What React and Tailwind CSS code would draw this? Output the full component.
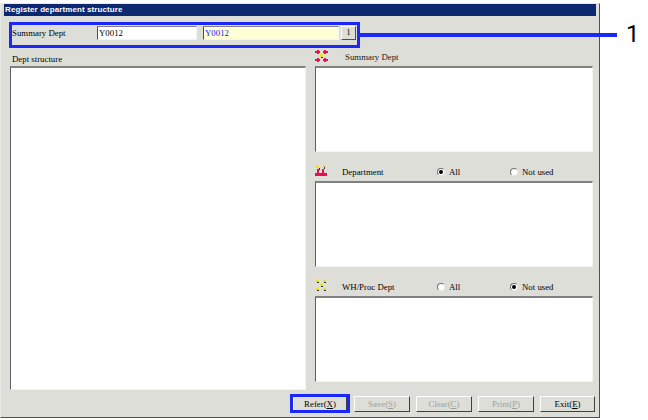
const serif = { fontFamily: '"Liberation Serif", serif' };

function Sunken({ className = '' }) {
  return (
    <div className={`bg-white border-t-2 border-l border-t-[#808080] border-l-[#606060] border-r border-b border-r-[#f4f4f0] border-b-[#f4f4f0] ${className}`} />
  );
}

function Field({ value, className = '' }) {
  return (
    <div className={`h-[14px] pl-[1px] leading-[12px] border border-t-[#808080] border-l-[#505050] border-r-[#f4f4f0] border-b-[#f4f4f0] ${className}`}>
      {value}
    </div>
  );
}

function Btn({ label, hotkey, disabled, className = '' }) {
  return (
    <button className={`h-[16px] flex items-center justify-center bg-[#deded8] border border-t-white border-l-white border-r-[#404040] border-b-[#404040] text-[8.8px] leading-none ${disabled ? 'text-[#a0a09a]' : 'text-black'} ${className}`}>
      {label}(<span className="underline">{hotkey}</span>)
    </button>
  );
}

function Radio({ checked, label, className = '' }) {
  return (
    <div className={`flex items-center gap-[4px] ${className}`}>
      <span className="w-[8px] h-[8px] rounded-full bg-white border border-t-[#707070] border-l-[#707070] border-r-[#e8e8e8] border-b-[#e8e8e8] flex items-center justify-center">
        {checked && <span className="w-[4px] h-[4px] rounded-full bg-black" />}
      </span>
      <span>{label}</span>
    </div>
  );
}

function SummaryIcon() {
  return (
    <svg width="13" height="12" viewBox="0 0 13 12" className="shrink-0">
      <path d="M0 1h2V0h2v1h1v2H4v1H2V3H0z" fill="#e8104f" />
      <path d="M13 1h-2V0H9v1H8v2h1v1h2V3h2z" fill="#e8104f" />
      <path d="M0 11h2v1h2v-1h1V9H4V8H2v1H0z" fill="#e8104f" />
      <path d="M13 11h-2v1H9v-1H8V9h1V8h2v1h2z" fill="#e8104f" />
      <rect x="5" y="4" width="3" height="3" fill="#e8e020" />
      <rect x="6" y="7" width="2" height="1" fill="#303030" />
    </svg>
  );
}

function DeptIcon() {
  return (
    <svg width="13" height="11" viewBox="0 0 13 11" className="shrink-0 mb-[3px]">
      <rect x="0" y="8" width="12" height="3" fill="#e8104f" />
      <rect x="2" y="4" width="2" height="5" fill="#e8104f" />
      <rect x="7" y="4" width="2" height="5" fill="#e8104f" />
      <rect x="1" y="1" width="3" height="2" fill="#e8e020" />
      <rect x="8" y="0" width="3" height="2" fill="#e8e020" />
      <rect x="4" y="3" width="1" height="2" fill="#303030" />
      <rect x="9" y="2" width="1" height="2" fill="#303030" />
    </svg>
  );
}

function WhIcon() {
  return (
    <svg width="13" height="11" viewBox="0 0 13 11" className="shrink-0 mb-[3px]">
      <rect x="1" y="0" width="3" height="2" fill="#e8e020" />
      <rect x="8" y="0" width="3" height="2" fill="#e8e020" />
      <rect x="1" y="8" width="3" height="2" fill="#e8e020" />
      <rect x="8" y="8" width="3" height="2" fill="#e8e020" />
      <rect x="5" y="4" width="3" height="2" fill="#e8e020" />
      <rect x="2" y="2" width="2" height="1" fill="#303030" />
      <rect x="9" y="2" width="2" height="1" fill="#303030" />
      <rect x="2" y="10" width="2" height="1" fill="#303030" />
      <rect x="9" y="10" width="2" height="1" fill="#303030" />
      <rect x="6" y="6" width="2" height="1" fill="#303030" />
    </svg>
  );
}

export default function App() {
  return (
    <div className="relative w-[648px] h-[420px] bg-white pt-[3px] overflow-hidden text-[8.8px] text-black" style={serif}>
      <div className="w-[600px] h-[415px] flex flex-col bg-[#deded8] border border-t-[#e8e8e4] border-l-[#e8e8e4] border-r-[#505050] border-b-[#505050] px-[3px]">
        <div className="h-[12px] shrink-0 bg-[#0c2870] text-white font-bold text-[8px] leading-[12px] pl-[1px] tracking-[0.1px]" style={{ fontFamily: '"Liberation Sans", sans-serif' }}>
          Register department structure
        </div>

        <div className="flex items-center h-[14px] mt-[10px] shrink-0">
          <span className="w-[93px] pl-[8px] mt-[2px]">Summary Dept</span>
          <Field value="Y0012" className="w-[100px] bg-white" />
          <Field value="Y0012" className="w-[136px] ml-[6px] bg-[#ffffd8] text-[#1818ff]" />
          <button className="w-[15px] h-[14px] ml-[2px] flex items-center justify-center bg-[#deded8] border border-t-white border-l-white border-r-[#505050] border-b-[#505050] text-[8px]">1</button>
        </div>

        <div className="flex flex-1 mt-[10px] min-h-0">
          <div className="w-[296px] ml-[6px] flex flex-col shrink-0">
            <div className="h-[16px] pl-[2px] pt-[2px] leading-[14px]">Dept structure</div>
            <Sunken className="h-[324px]" />
          </div>

          <div className="w-[278px] ml-[9px] flex flex-col">
            <div className="h-[16px] flex items-start">
              <SummaryIcon />
              <span className="ml-[17px] leading-[14px] text-[#202020]">Summary Dept</span>
            </div>
            <Sunken className="h-[86px]" />

            <div className="h-[29px] flex items-end pb-[2px]">
              <DeptIcon />
              <span className="ml-[14px] w-[95px]">Department</span>
              <Radio checked label="All" className="w-[73px]" />
              <Radio label="Not used" />
            </div>
            <Sunken className="h-[86px]" />

            <div className="h-[29px] flex items-end pb-[2px]">
              <WhIcon />
              <span className="ml-[14px] w-[95px]">WH/Proc Dept</span>
              <Radio label="All" className="w-[73px]" />
              <Radio checked label="Not used" />
            </div>
            <Sunken className="h-[86px]" />
          </div>
        </div>

        <div className="h-[27px] shrink-0 flex items-start justify-end gap-[6px] pr-[1px] pt-[6px]">
          <Btn label="Refer" hotkey="X" className="w-[54px] mr-[1px]" />
          <Btn label="Save" hotkey="S" disabled className="w-[56px]" />
          <Btn label="Clear" hotkey="C" disabled className="w-[56px]" />
          <Btn label="Print" hotkey="P" disabled className="w-[56px]" />
          <Btn label="Exit" hotkey="E" className="w-[55px]" />
        </div>
      </div>

      {/* callouts drawn over the window */}
      <div className="absolute left-[9px] top-[22px] w-[351px] h-[26px] border-[3px] border-[#1c28f8]" />
      <div className="absolute left-[359px] top-[33px] w-[258px] h-[4px] bg-[#1c28f8]" />
      <div className="absolute left-[290px] top-[394px] w-[60px] h-[19px] border-[3px] border-[#1c28f8]" />
      <div className="absolute left-[626px] top-[20px] text-[24px] leading-[28px]" style={{ fontFamily: 'Roboto, sans-serif' }}>1</div>
    </div>
  );
}
